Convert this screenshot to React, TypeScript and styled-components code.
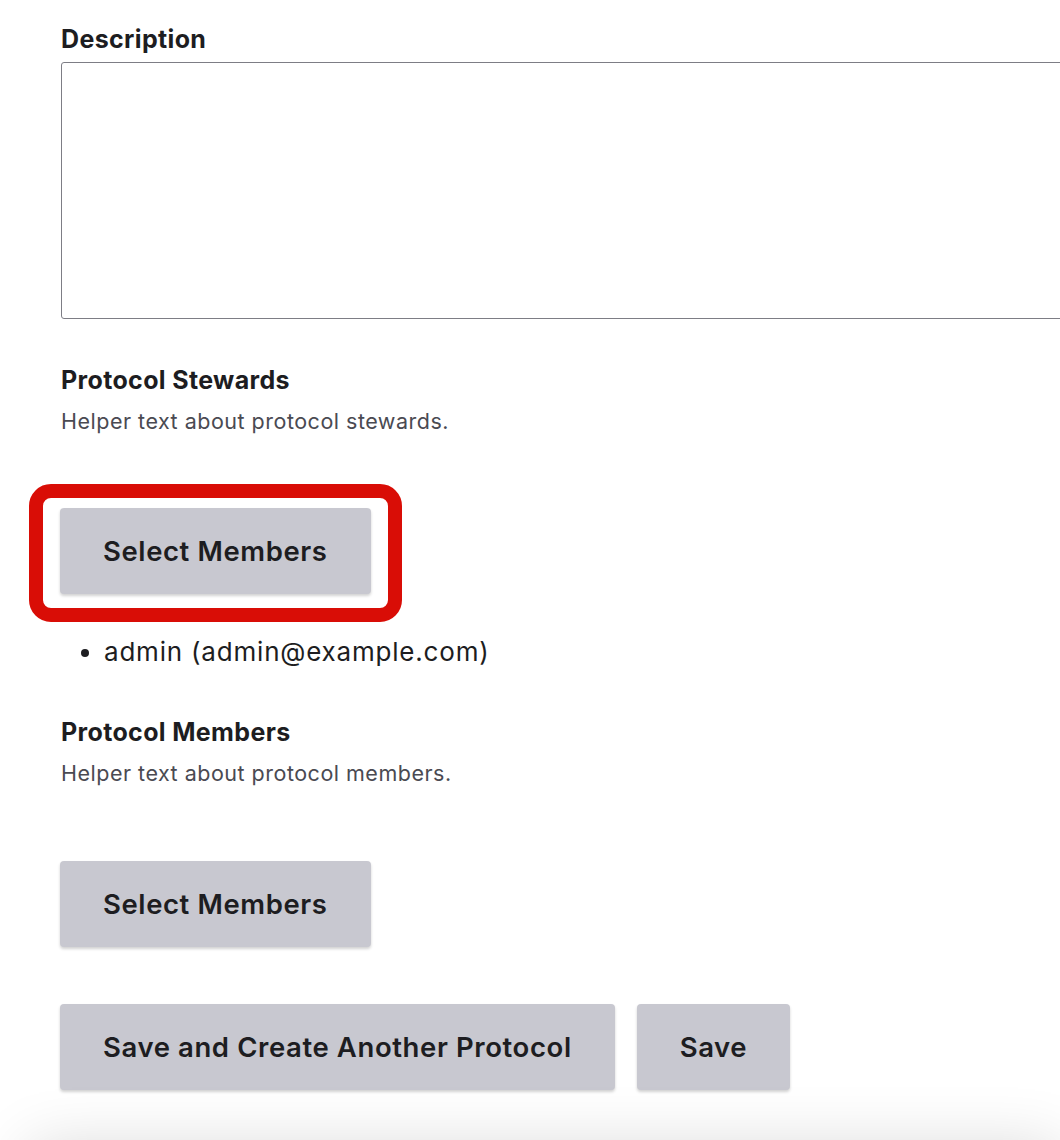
import React from 'react';
import styled, { createGlobalStyle } from 'styled-components';

const GlobalStyle = createGlobalStyle`
  body {
    margin: 0;
    background: #ffffff;
    font-family: Inter, "Noto Sans", "Liberation Sans", sans-serif;
    color: #1d1d21;
    overflow: hidden;
  }
`;

const Page = styled.div`
  padding: 22px 0 0 61px;
  display: flex;
  flex-direction: column;
  overflow: hidden;
`;

const Field = styled.div<{ $top?: number }>`
  display: flex;
  flex-direction: column;
  margin-top: ${p => p.$top ?? 0}px;
`;

const Label = styled.label`
  font-size: 25px;
  font-weight: 700;
  line-height: 34px;
  letter-spacing: 0.35px;
  color: #1d1d21;
`;

const Helper = styled.p`
  margin: 9px 0 0;
  font-size: 21.5px;
  line-height: 30px;
  letter-spacing: 0.5px;
  color: #4a4a52;
`;

const TextArea = styled.textarea`
  margin-top: 6px;
  width: 1100px;
  height: 257px;
  box-sizing: border-box;
  border: 1px solid #7d7d85;
  border-radius: 3px;
  resize: none;
  font: inherit;
`;

const Button = styled.button`
  height: 86px;
  padding: 0 43px;
  border: none;
  border-radius: 4px;
  background: #c8c8d0;
  color: #1d1d21;
  font-family: Inter, "Noto Sans", "Liberation Sans", sans-serif;
  font-size: 27.5px;
  font-weight: 600;
  letter-spacing: 0.6px;
  box-shadow: 0 2px 3px rgba(0, 0, 0, 0.18);
  cursor: pointer;
  white-space: nowrap;
`;

const ButtonRow = styled.div<{ $top: number }>`
  display: flex;
  gap: 22px;
  margin-top: ${p => p.$top}px;
  margin-left: -1px;
`;

const Highlight = styled.div`
  position: relative;
  &::after {
    content: '';
    position: absolute;
    inset: -24px -31px -28px -31px;
    border: 14px solid #d90d06;
    border-radius: 22px;
    pointer-events: none;
  }
`;

const MemberList = styled.ul`
  margin: 41px 0 0;
  padding-left: 43px;
  font-size: 26px;
  line-height: 34px;
  letter-spacing: 0.8px;
  color: #1d1d21;
`;

const ShadowPanel = styled.div`
  margin: 58px 0 0 -31px;
  height: 200px;
  background: #ffffff;
  box-shadow: 0 0 60px rgba(0, 0, 0, 0.16);
`;

const App: React.FC = () => {
  return (
    <>
      <GlobalStyle />
      <Page>
        <Field>
          <Label>Description</Label>
          <TextArea />
        </Field>

        <Field $top={44}>
          <Label>Protocol Stewards</Label>
          <Helper>Helper text about protocol stewards.</Helper>
        </Field>
        <ButtonRow $top={72}>
          <Highlight>
            <Button>Select Members</Button>
          </Highlight>
        </ButtonRow>
        <MemberList>
          <li>admin (admin@example.com)</li>
        </MemberList>

        <Field $top={46}>
          <Label>Protocol Members</Label>
          <Helper>Helper text about protocol members.</Helper>
        </Field>
        <ButtonRow $top={73}>
          <Button>Select Members</Button>
        </ButtonRow>

        <ButtonRow $top={57}>
          <Button>Save and Create Another Protocol</Button>
          <Button>Save</Button>
        </ButtonRow>
        <ShadowPanel />
      </Page>
    </>
  );
};

export default App;
